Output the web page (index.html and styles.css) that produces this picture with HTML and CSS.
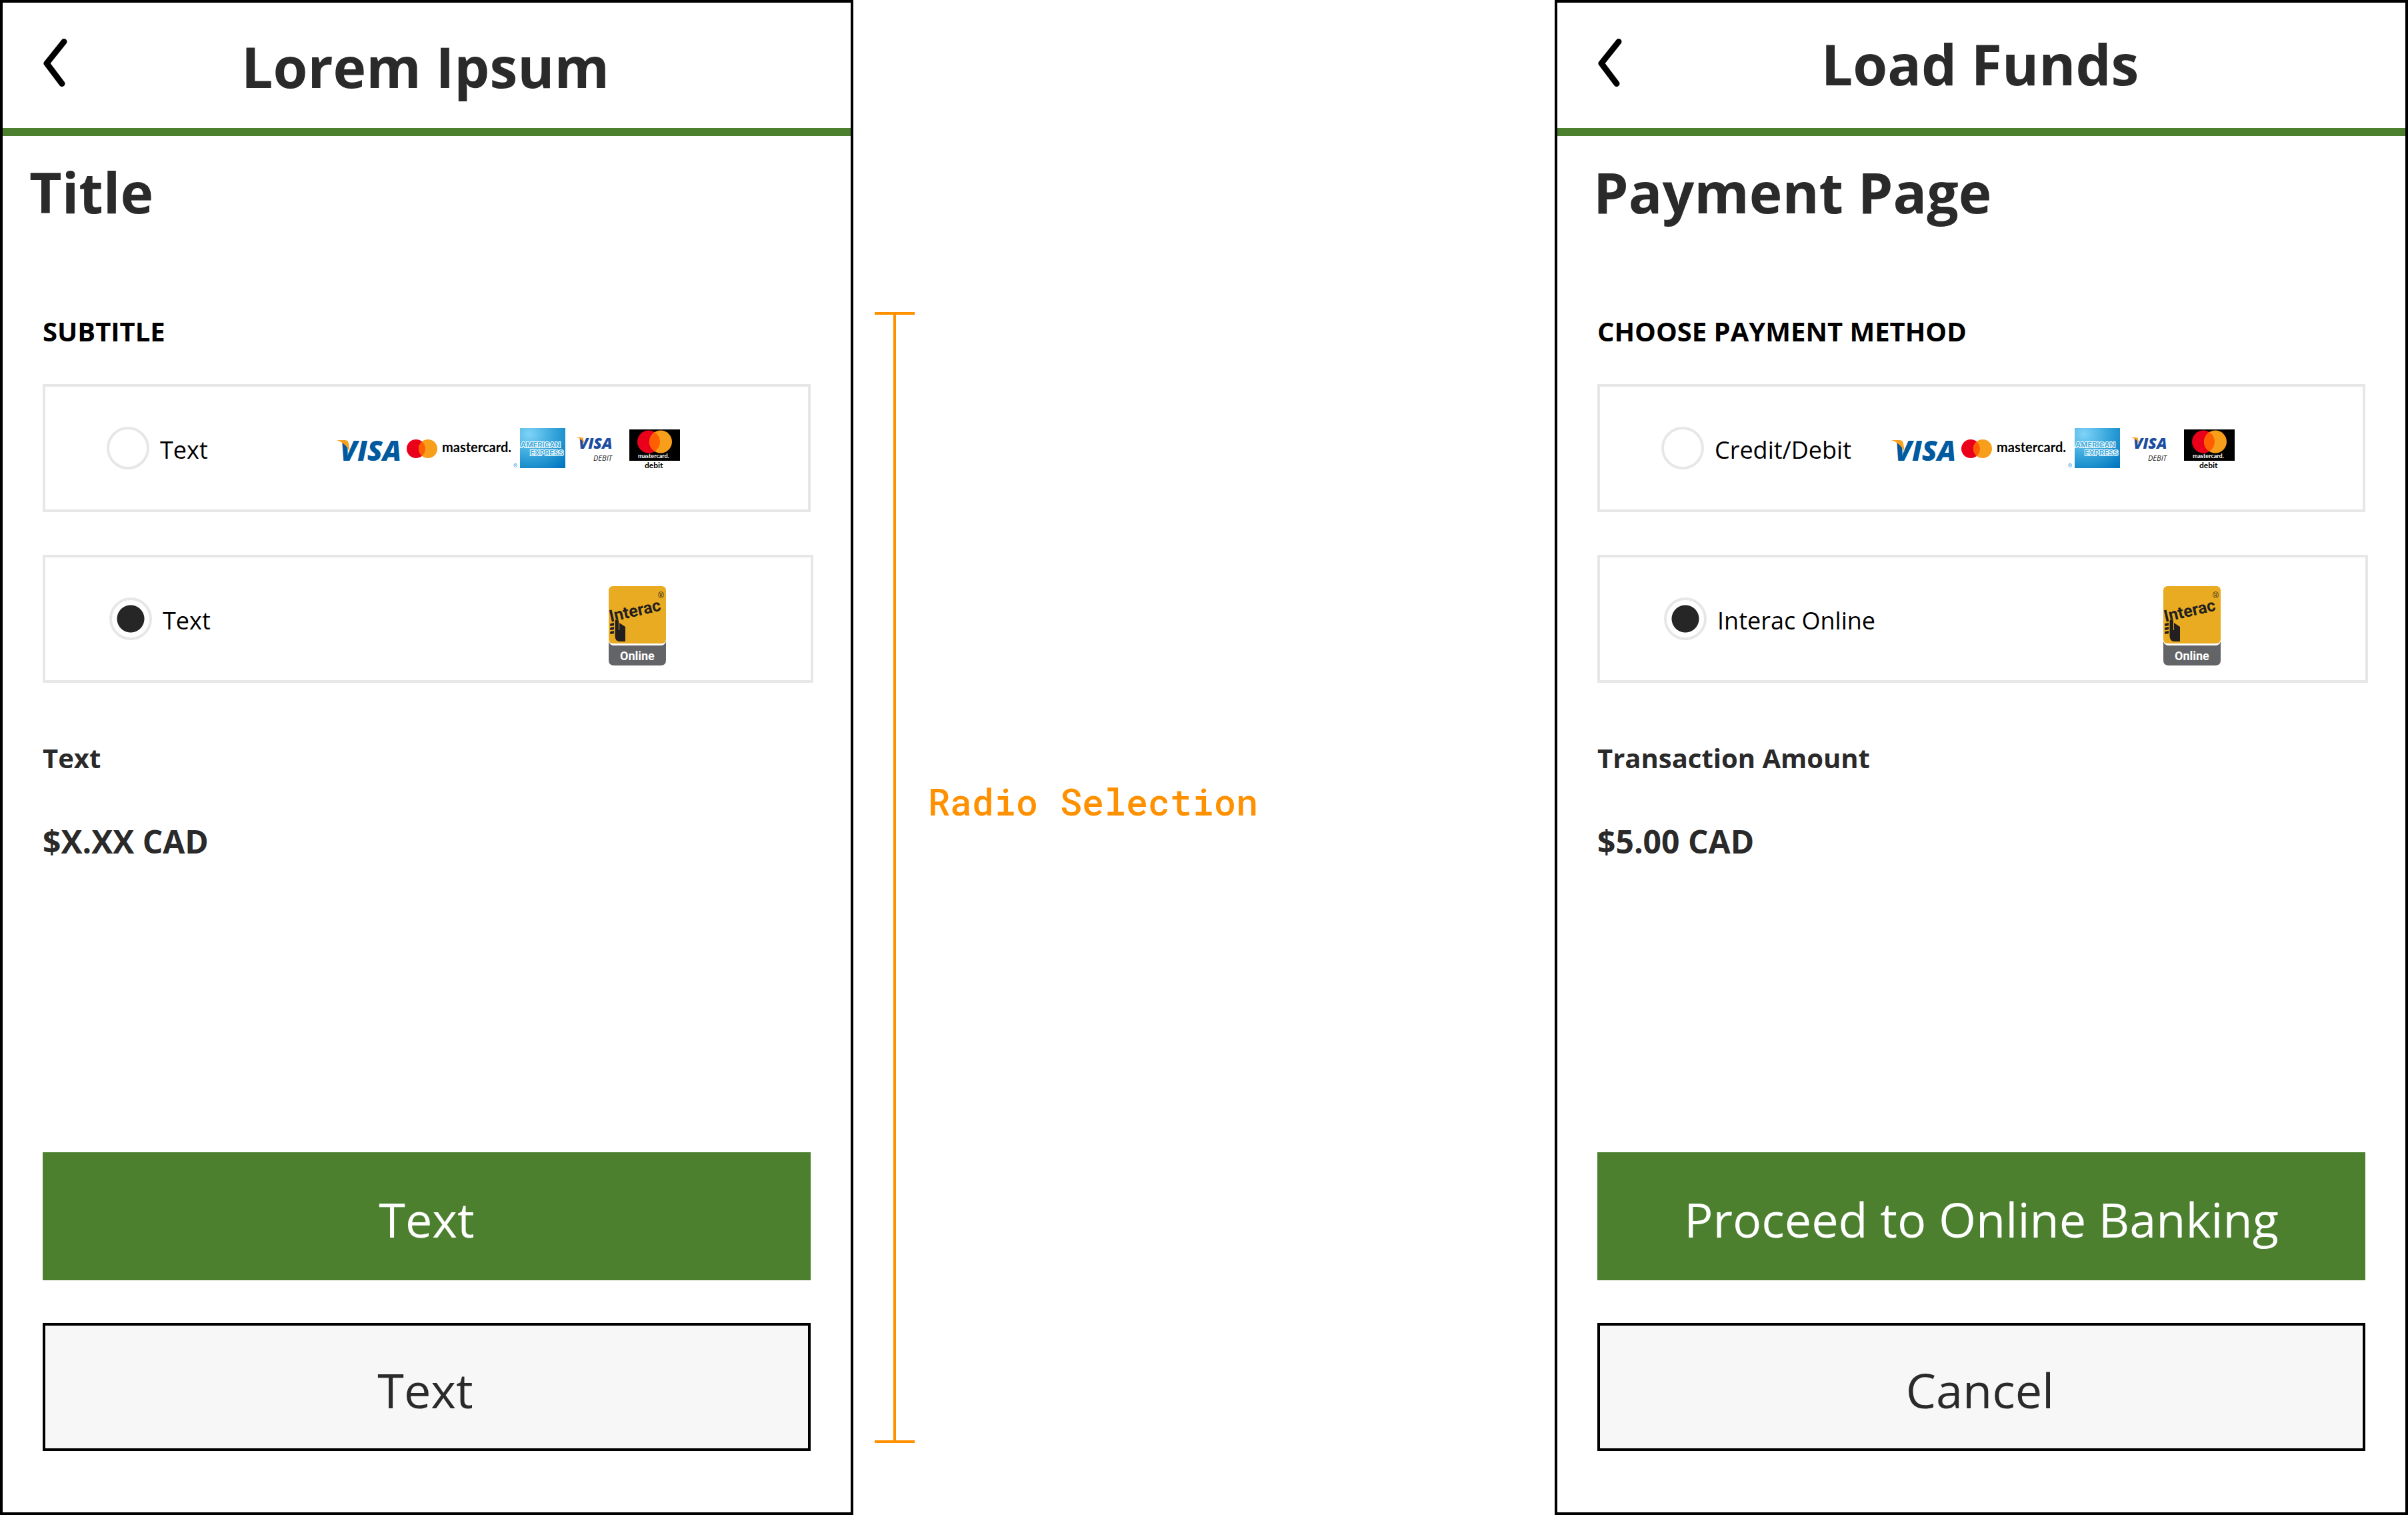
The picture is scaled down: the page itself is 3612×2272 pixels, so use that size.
FILE: index.html
```html
<!DOCTYPE html>
<html lang="en">
<head>
<meta charset="utf-8">
<title>Radio Selection</title>
<meta name="viewport" content="width=device-width, initial-scale=1">
<link rel="stylesheet" href="styles.css">
</head>
<body>
<main class="board">
  <section class="screen screen--template">
    <header class="topbar">
      <button class="back" type="button" aria-label="Back">
        <svg class="back-icon" viewBox="0 0 40 80" aria-hidden="true"><path d="M32 8.500 6 41 29 71.500"/></svg>
      </button>
      <h1 class="topbar-title">Lorem Ipsum</h1>
    </header>
    <form class="content">
      <h2 class="title">Title</h2>
      <fieldset class="methods">
        <legend class="subtitle">SUBTITLE</legend>
        <div class="option">
          <input class="radio" type="radio" name="template-method" id="template-card">
          <label class="option-label" for="template-card">Text</label>
          <svg class="cards" viewBox="504 632 520 80" role="img" aria-label="Accepted cards">
            <text class="visa" x="510" y="691">VISA</text>
            <path class="wing" d="M505 660H517Q522 660 523 665L525 678Q518 664 505 660Z"/>
            <circle class="mc-red" cx="624" cy="673" r="14"/>
            <circle class="mc-orange" cx="642" cy="673" r="14"/>
            <path class="mc-mid" d="M633 662.300A14 14 0 0 1 633 683.700A14 14 0 0 1 633 662.300Z"/>
            <text class="mc-word" x="663" y="678">mastercard.</text>
            <text class="reg" x="770" y="702">®</text>
            <defs><radialGradient id="amex-a" cx="0.2" cy="0.15" r="1.1"><stop offset="0" stop-color="#7fd3f7"/><stop offset="0.5" stop-color="#36a5da"/><stop offset="1" stop-color="#0077c0"/></radialGradient></defs>
            <rect x="780" y="642" width="68" height="60" fill="url(#amex-a)"/>
            <text class="amex" x="781" y="671">AMERICAN</text>
            <text class="amex" x="795" y="683">EXPRESS</text>
            <text class="visa visa--small" x="868" y="673">VISA</text>
            <path class="wing" d="M865 656H872Q875 656 875 659L877 666Q873 658 865 656Z"/>
            <text class="debit-slanted" x="890" y="691">DEBIT</text>
            <rect x="944" y="644" width="76" height="47"/>
            <circle class="mc-red" cx="973" cy="662.500" r="17"/>
            <circle class="mc-orange" cx="991" cy="662.500" r="17"/>
            <path class="mc-mid" d="M982 648.100A17 17 0 0 1 982 676.900A17 17 0 0 1 982 648.100Z"/>
            <text class="mc-word mc-word--small" x="957" y="687">mastercard.</text>
            <text class="mc-debit" x="967" y="702">debit</text>
          </svg>
        </div>
        <div class="option option--wide">
          <input class="radio" type="radio" name="template-method" id="template-interac" checked>
          <label class="option-label" for="template-interac">Text</label>
          <svg class="interac" viewBox="0 0 88 120" role="img" aria-label="Interac Online">
            <path class="interac-base" d="M1 84Q3 90 9 90H79Q85 90 87 84V112Q87 120 79 120H9Q1 120 1 112Z"/>
            <rect class="interac-tile" x="1" y="1" width="86" height="86" rx="6"/>
            <text class="interac-word" x="4" y="55" transform="rotate(-13 4 55)">Interac</text>
            <path class="interac-gap" d="M9 62V52Q12 48 16 52V58Z"/>
            <path class="interac-hand" d="M10.500 54Q10.500 50.500 13 50.500T16 54V67H17V56L26 62V84H17Q10.500 83 10.500 76ZM4 57 9 56V60L4 61Q2 59 4 57ZM4 63 9 62V66L4 67Q2 65 4 63ZM4 69 9 68V72L4 73Q2 71 4 69Z"/>
            <text class="interac-reg" x="75" y="19">®</text>
            <text class="interac-online" x="18" y="112">Online</text>
          </svg>
        </div>
      </fieldset>
      <p class="amount-label">Text</p>
      <p class="amount">$X.XX CAD</p>
      <div class="actions">
        <button class="button button--primary" type="button">Text</button>
        <button class="button button--secondary" type="button">Text</button>
      </div>
    </form>
  </section>

  <aside class="note">
    <div class="bracket"></div>
    <p class="note-label">Radio Selection</p>
  </aside>

  <section class="screen screen--example">
    <header class="topbar">
      <button class="back" type="button" aria-label="Back">
        <svg class="back-icon" viewBox="0 0 40 80" aria-hidden="true"><path d="M32 8.500 6 41 29 71.500"/></svg>
      </button>
      <h1 class="topbar-title">Load Funds</h1>
    </header>
    <form class="content">
      <h2 class="title">Payment Page</h2>
      <fieldset class="methods">
        <legend class="subtitle">CHOOSE PAYMENT METHOD</legend>
        <div class="option">
          <input class="radio" type="radio" name="payment-method" id="payment-card">
          <label class="option-label" for="payment-card">Credit/Debit</label>
          <svg class="cards" viewBox="504 632 520 80" role="img" aria-label="Accepted cards">
            <text class="visa" x="510" y="691">VISA</text>
            <path class="wing" d="M505 660H517Q522 660 523 665L525 678Q518 664 505 660Z"/>
            <circle class="mc-red" cx="624" cy="673" r="14"/>
            <circle class="mc-orange" cx="642" cy="673" r="14"/>
            <path class="mc-mid" d="M633 662.300A14 14 0 0 1 633 683.700A14 14 0 0 1 633 662.300Z"/>
            <text class="mc-word" x="663" y="678">mastercard.</text>
            <text class="reg" x="770" y="702">®</text>
            <defs><radialGradient id="amex-b" cx="0.2" cy="0.15" r="1.1"><stop offset="0" stop-color="#7fd3f7"/><stop offset="0.5" stop-color="#36a5da"/><stop offset="1" stop-color="#0077c0"/></radialGradient></defs>
            <rect x="780" y="642" width="68" height="60" fill="url(#amex-b)"/>
            <text class="amex" x="781" y="671">AMERICAN</text>
            <text class="amex" x="795" y="683">EXPRESS</text>
            <text class="visa visa--small" x="868" y="673">VISA</text>
            <path class="wing" d="M865 656H872Q875 656 875 659L877 666Q873 658 865 656Z"/>
            <text class="debit-slanted" x="890" y="691">DEBIT</text>
            <rect x="944" y="644" width="76" height="47"/>
            <circle class="mc-red" cx="973" cy="662.500" r="17"/>
            <circle class="mc-orange" cx="991" cy="662.500" r="17"/>
            <path class="mc-mid" d="M982 648.100A17 17 0 0 1 982 676.900A17 17 0 0 1 982 648.100Z"/>
            <text class="mc-word mc-word--small" x="957" y="687">mastercard.</text>
            <text class="mc-debit" x="967" y="702">debit</text>
          </svg>
        </div>
        <div class="option option--wide">
          <input class="radio" type="radio" name="payment-method" id="payment-interac" checked>
          <label class="option-label" for="payment-interac">Interac Online</label>
          <svg class="interac" viewBox="0 0 88 120" role="img" aria-label="Interac Online">
            <path class="interac-base" d="M1 84Q3 90 9 90H79Q85 90 87 84V112Q87 120 79 120H9Q1 120 1 112Z"/>
            <rect class="interac-tile" x="1" y="1" width="86" height="86" rx="6"/>
            <text class="interac-word" x="4" y="55" transform="rotate(-13 4 55)">Interac</text>
            <path class="interac-gap" d="M9 62V52Q12 48 16 52V58Z"/>
            <path class="interac-hand" d="M10.500 54Q10.500 50.500 13 50.500T16 54V67H17V56L26 62V84H17Q10.500 83 10.500 76ZM4 57 9 56V60L4 61Q2 59 4 57ZM4 63 9 62V66L4 67Q2 65 4 63ZM4 69 9 68V72L4 73Q2 71 4 69Z"/>
            <text class="interac-reg" x="75" y="19">®</text>
            <text class="interac-online" x="18" y="112">Online</text>
          </svg>
        </div>
      </fieldset>
      <p class="amount-label">Transaction Amount</p>
      <p class="amount">$5.00 CAD</p>
      <div class="actions">
        <button class="button button--primary" type="button">Proceed to Online Banking</button>
        <button class="button button--secondary" type="button">Cancel</button>
      </div>
    </form>
  </section>
</main>
</body>
</html>
```
FILE: styles.css
```css
* { box-sizing: border-box; }

body {
  margin: 0;
  background: #fff;
  color: #2a2a2a;
  font-family: "Open Sans", "Noto Sans", sans-serif;
}

h1, h2, p { margin: 0; }

.board {
  display: grid;
  grid-template-columns: minmax(0, 1280fr) minmax(0, 1052fr) minmax(0, 1280fr);
  min-height: 100vh;
}

.screen {
  display: flex;
  flex-direction: column;
  border: 4px solid #000;
}

/* Top bar */
.topbar {
  display: grid;
  grid-template-columns: 1fr auto 1fr;
  align-items: center;
  height: 200px;
  padding: 0 64px 0 60px;
  border-bottom: 12px solid #4c802f;
}

.back {
  justify-self: start;
  padding: 0 0 8px;
  border: 0;
  background: none;
}

.back-icon {
  display: block;
  width: 40px;
  height: 80px;
  fill: none;
  stroke: #000;
  stroke-width: 9;
  stroke-linecap: round;
  stroke-linejoin: round;
}

.topbar-title,
.title {
  font-size: 84px;
  font-weight: 700;
  line-height: 112px;
}

.screen--template .topbar-title { padding-top: 4px; }
.screen--example .topbar-title { padding-bottom: 4px; }

/* Content */
.content {
  display: flex;
  flex: 1;
  flex-direction: column;
  padding: 28px 60px 92px;
}

.title { margin-bottom: 124px; }
.screen--template .title { margin-left: -20px; }
.screen--example .title { margin-left: -6px; }

.methods {
  min-width: 0;
  margin: 0;
  padding: 0;
  border: 0;
}

.subtitle {
  margin-bottom: 50px;
  padding: 0;
  color: #000;
  font-size: 40px;
  font-weight: 700;
  line-height: 58px;
}

.option {
  display: flex;
  align-items: center;
  height: 192px;
  padding: 0 188px 0 92px;
  border: 4px solid #e7e7e7;
}

.option--wide {
  margin: 64px -4px 0 0;
  padding: 0 216px 0 96px;
}

.radio {
  flex: none;
  width: 64px;
  height: 64px;
  margin: 0 12px 0 0;
  border: 4px solid #e7e7e7;
  border-radius: 50%;
  appearance: none;
  background: #fff;
}

.radio:checked { background: radial-gradient(circle, #262626 20px, #fff 21px); }

.option-label {
  padding: 4px 0 0 4px;
  color: #000;
  font-size: 36px;
}

.cards {
  flex: none;
  width: 520px;
  height: 80px;
  margin-left: auto;
}

.interac {
  flex: none;
  width: 88px;
  height: 120px;
  margin: 20px 0 0 auto;
}

.amount-label {
  margin: 84px 0 62px;
  font-size: 40px;
  font-weight: 700;
  line-height: 58px;
}

.amount {
  font-size: 48px;
  font-weight: 700;
  line-height: 68px;
}

.actions {
  display: grid;
  gap: 64px;
  margin-top: auto;
}

.button {
  height: 192px;
  padding: 8px 0 0;
  border: 0;
  font: 400 72px "Open Sans", "Noto Sans", sans-serif;
}

.button--primary { background: #4c802f; color: #fff; }

.button--secondary {
  padding-right: 4px;
  border: 4px solid #000;
  background: #f7f7f7;
  color: #2a2a2a;
}

/* Annotation between the screens */
.note {
  display: flex;
  gap: 20px;
  padding: 468px 32px 108px;
  color: #ff9100;
}

.bracket {
  width: 60px;
  border: solid #ff9100;
  border-width: 4px 0;
  background: linear-gradient(#ff9100, #ff9100) center / 4px 100% no-repeat;
}

.note-label {
  margin-top: 702px;
  font: 500 55px/64px "Roboto Mono", "DejaVu Sans Mono", monospace;
}

/* Card logos */
.visa { font: italic 800 42px "Open Sans", sans-serif; fill: #005aa0; }
.visa--small { font-size: 23px; fill: #1c4da1; }
.wing { fill: #f9a21b; }
.mc-red { fill: #eb001b; }
.mc-orange { fill: #f79e1b; }
.mc-mid { fill: #ff5f00; }
.mc-word { font: 700 20px Lato, sans-serif; fill: #000; }
.mc-word--small { font-size: 9px; fill: #fff; }
.mc-debit { font: 700 12px Lato, sans-serif; fill: #000; }
.debit-slanted { font: italic 400 11px "Open Sans", sans-serif; fill: #222; }
.reg { font: 400 9px Inter, sans-serif; fill: #2fa0d8; }
.amex {
  font: 700 11px Inter, sans-serif;
  fill: #45aede;
  stroke: #fff;
  stroke-width: 2;
  paint-order: stroke;
}

.interac-base { fill: #636467; }
.interac-tile, .interac-gap { fill: #e9ab21; }
.interac-hand { fill: #231f20; }
.interac-word { font: 700 25px Roboto, sans-serif; fill: #231f20; }
.interac-reg { font: 400 12px "Liberation Sans", sans-serif; fill: #231f20; }
.interac-online { font: 700 18px Roboto, sans-serif; fill: #fff; }
```
